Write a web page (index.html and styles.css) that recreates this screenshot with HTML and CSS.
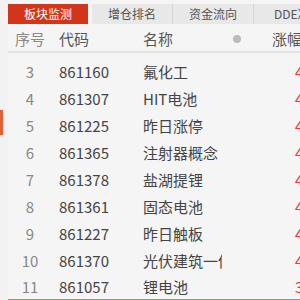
FILE: index.html
```html
<!DOCTYPE html>
<html lang="zh-CN">
<head>
    <meta charset="UTF-8">
    <title>板块监测</title>
    <link rel="stylesheet" href="styles.css">
</head>
<body>
    <div class="side">
        <div class="side-mark"></div>
    </div>
    <div class="main">
        <div class="tabs">
            <div class="tab active">板块监测</div>
            <div class="tab">增仓排名</div>
            <div class="tab">资金流向</div>
            <div class="tab last">DDE决策</div>
        </div>

        <div class="row head">
            <div class="num">序号</div>
            <div class="code">代码</div>
            <div class="name">名称</div>
            <div class="mark"><span class="dot"></span></div>
            <div class="val">涨幅</div>
        </div>

        <div class="list">
            <div class="row"><div class="num">3</div><div class="code">861160</div><div class="name">氟化工</div><div class="val">4.82%</div></div>
            <div class="row"><div class="num">4</div><div class="code">861307</div><div class="name">HIT电池</div><div class="val">4.61%</div></div>
            <div class="row"><div class="num">5</div><div class="code">861225</div><div class="name">昨日涨停</div><div class="val">4.55%</div></div>
            <div class="row"><div class="num">6</div><div class="code">861365</div><div class="name">注射器概念</div><div class="val">4.37%</div></div>
            <div class="row"><div class="num">7</div><div class="code">861378</div><div class="name">盐湖提锂</div><div class="val">4.26%</div></div>
            <div class="row"><div class="num">8</div><div class="code">861361</div><div class="name">固态电池</div><div class="val">4.15%</div></div>
            <div class="row"><div class="num">9</div><div class="code">861227</div><div class="name">昨日触板</div><div class="val">4.08%</div></div>
            <div class="row"><div class="num">10</div><div class="code">861370</div><div class="name">光伏建筑一体化</div><div class="val">4.01%</div></div>
            <div class="row last-row"><div class="num">11</div><div class="code">861057</div><div class="name">锂电池</div><div class="val">3.97%</div></div>
        </div>
    </div>
</body>
</html>
```

FILE: styles.css
```css
body {
    margin: 0;
    width: 300px;
    height: 300px;
    overflow: hidden;
    display: flex;
    background-color: #f5f5f5;
    font-family: "Noto Sans CJK SC", "Microsoft YaHei", sans-serif;
    color: #444;
}
.side {
    width: 8px;
    flex-shrink: 0;
    background-color: #f2f2f2;
    padding-top: 110px;
}
.side-mark {
    width: 3px;
    height: 25px;
    background-color: #e0603a;
}
.main {
    flex: 1;
    min-width: 0;
    overflow: hidden;
}
.tabs {
    display: flex;
    margin-top: 4px;
    height: 20px;
    white-space: nowrap;
}
.tab {
    width: 80px;
    flex-shrink: 0;
    font-size: 12px;
    line-height: 20px;
    text-align: center;
    color: #555;
    background-color: #e8e8e8;
    border-right: 1px solid #d4d4d4;
}
.tab.active {
    margin-right: 4px;
    background-color: #d2351a;
    color: #fff;
    border-right: none;
}
.tab.last {
    padding-left: 20px;
    text-align: left;
}
.row {
    display: grid;
    grid-template-columns: 44px 84px 86px 30px 1fr;
    height: 27px;
    line-height: 27px;
    font-size: 15px;
    white-space: nowrap;
}
.row > div {
    overflow: hidden;
}
.head {
    margin-top: 2px;
    height: 25px;
    line-height: 25px;
    border-bottom: 2px solid #e2e2e2;
    color: #555;
}
.list {
    padding-top: 5px;
}
.num {
    text-align: center;
    color: #888;
}
.code {
    padding-left: 7px;
}
.name {
    padding-left: 7px;
}
.mark {
    display: flex;
    align-items: center;
    justify-content: center;
}
.dot {
    width: 8px;
    height: 8px;
    border-radius: 50%;
    background-color: #bbb;
}
.val {
    grid-column: 5;
    padding-left: 43px;
    color: #e83b3b;
}
.head .val {
    padding-left: 20px;
    color: #555;
}
.last-row {
    height: 25px;
    line-height: 25px;
    border-bottom: 1px solid #e07a5f;
}
```
